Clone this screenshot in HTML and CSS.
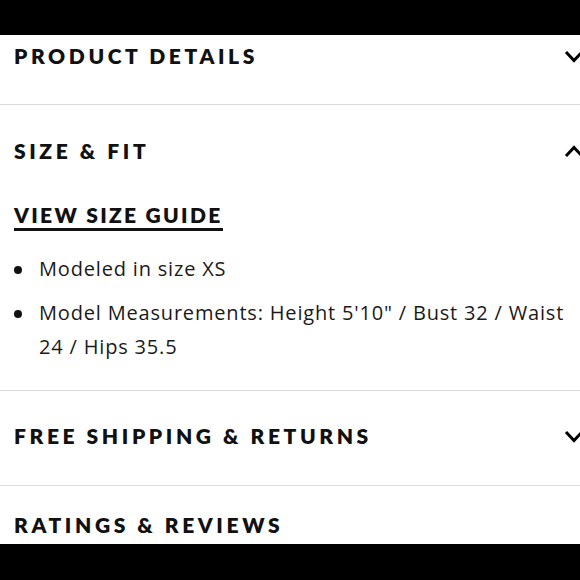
FILE: index.html
```html
<!DOCTYPE html>
<html lang="en">
<head>
<meta charset="utf-8">
<title>Product accordion</title>
<link rel="stylesheet" href="styles.css">
</head>
<body>
<div class="topbar"></div>
<main class="accordion">
  <section class="acc-item">
    <div class="acc-head acc-head--first">
      <h2 class="acc-title">PRODUCT DETAILS</h2>
      <svg class="chev" width="20" height="13" viewBox="0 0 20 13"><path d="M2 2 L10 10.5 L18 2" fill="none" stroke="#000" stroke-width="3"/></svg>
    </div>
  </section>
  <section class="acc-item">
    <div class="acc-head">
      <h2 class="acc-title">SIZE &amp; FIT</h2>
      <svg class="chev" width="20" height="13" viewBox="0 0 20 13"><path d="M2 11 L10 2.5 L18 11" fill="none" stroke="#000" stroke-width="3"/></svg>
    </div>
    <div class="acc-body">
      <a class="size-guide" href="#">VIEW SIZE GUIDE</a>
      <ul class="facts">
        <li>Modeled in size XS</li>
        <li>Model Measurements: Height 5'10" / Bust 32 / Waist 24 / Hips 35.5</li>
      </ul>
    </div>
  </section>
  <section class="acc-item">
    <div class="acc-head acc-head--closed">
      <h2 class="acc-title">FREE SHIPPING &amp; RETURNS</h2>
      <svg class="chev" width="20" height="13" viewBox="0 0 20 13"><path d="M2 2 L10 10.5 L18 2" fill="none" stroke="#000" stroke-width="3"/></svg>
    </div>
  </section>
  <section class="acc-item acc-item--last">
    <div class="acc-head acc-head--last">
      <h2 class="acc-title">RATINGS &amp; REVIEWS</h2>
    </div>
  </section>
</main>
<div class="bottombar"></div>
</body>
</html>
```
FILE: styles.css
```css
html, body {
  margin: 0;
  padding: 0;
  background: #fff;
  overflow: hidden;
}
body {
  width: 580px;
  height: 580px;
  color: #111;
  font-family: "Lato", "Liberation Sans", sans-serif;
}
.topbar {
  height: 35px;
  background: #000;
}
.bottombar {
  position: fixed;
  left: 0;
  right: 0;
  bottom: 0;
  height: 36px;
  background: #000;
}
.accordion {
  display: flex;
  flex-direction: column;
}
.acc-item {
  border-bottom: 1px solid #dcdcdc;
}
.acc-item--last {
  border-bottom: 0;
}
.acc-head {
  display: flex;
  align-items: center;
  justify-content: space-between;
  height: 92px;
  padding-left: 14px;
}
.acc-head--first {
  height: 69px;
  align-items: flex-start;
  padding-top: 9px;
  box-sizing: border-box;
}
.acc-head--closed {
  height: 90px;
  padding-bottom: 4px;
}
.acc-head--last {
  height: 77px;
}
.acc-title {
  margin: 0;
  font-family: "Lato", "Liberation Sans", sans-serif;
  font-weight: 800;
  font-size: 21px;
  line-height: 24px;
  letter-spacing: 3.6px;
  color: #111;
}
.chev {
  flex: none;
  margin-right: -4px;
}
.acc-head--first .chev {
  margin-top: 6px;
}
.acc-body {
  padding: 7px 0 26px 14px;
}
.size-guide {
  display: inline-block;
  font-weight: 800;
  font-size: 21px;
  line-height: 21px;
  letter-spacing: 2.3px;
  color: #111;
  text-decoration: none;
  padding-bottom: 3px;
  border-bottom: 3px solid #111;
}
.facts {
  list-style: none;
  margin: 21px 0 0;
  padding: 0;
  display: flex;
  flex-direction: column;
  gap: 10px;
}
.facts li {
  position: relative;
  padding-left: 25px;
  font-family: "Open Sans", "Liberation Sans", sans-serif;
  font-size: 20px;
  line-height: 34px;
  letter-spacing: 0.82px;
  color: #1a1a1a;
}
.facts li::before {
  content: "";
  position: absolute;
  left: 0;
  top: 14px;
  width: 8px;
  height: 8px;
  border-radius: 50%;
  background: #111;
}
```
